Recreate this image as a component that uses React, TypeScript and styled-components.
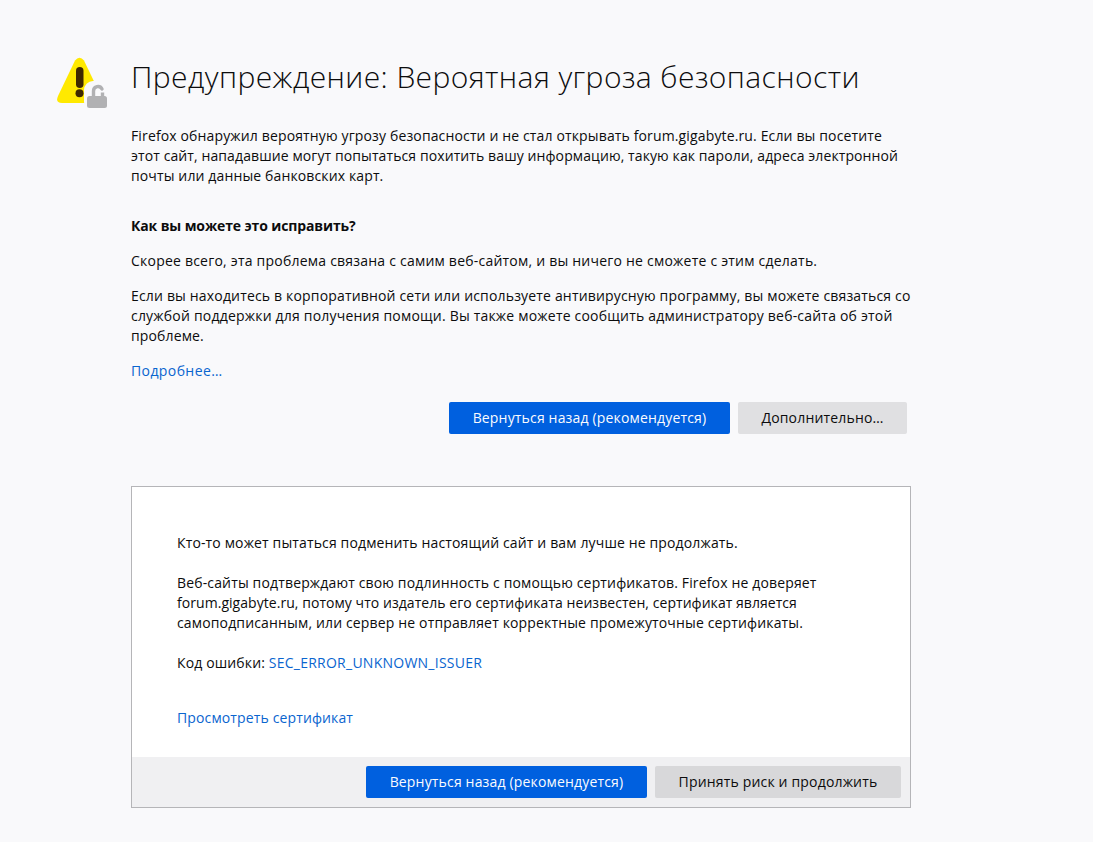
import React from "react";
import styled, { createGlobalStyle } from "styled-components";

const Global = createGlobalStyle`
  html, body { margin: 0; padding: 0; background: #f9f9fb; }
  body { font-family: "Open Sans", "Noto Sans", sans-serif; font-size: 14px; line-height: 20px; color: #0c0c0d; }
`;

const Page = styled.main`
  width: 1093px;
  height: 842px;
  overflow: hidden;
  box-sizing: border-box;
  padding: 52px 0 0 56px;
  display: flex;
  gap: 23px;
`;

const IconSlot = styled.div`
  width: 52px;
  flex: none;
`;

const Column = styled.div`
  width: 780px;
  flex: none;
`;

const Title = styled.h1`
  margin: -1px 0 0;
  font-size: 30px;
  line-height: 52px;
  font-weight: 300;
  letter-spacing: 0.41px;
  white-space: nowrap;
`;

const Para = styled.p<{ $top?: number }>`
  margin: ${(p) => p.$top ?? 0}px 0 0;
  white-space: nowrap;
  letter-spacing: 0.13px;
`;

const Line = styled.span<{ $track?: number }>`
  display: block;
  letter-spacing: ${(p) => p.$track ?? 0.13}px;
`;

const Strong = styled(Para)`
  font-weight: 700;
  letter-spacing: -0.12px;
`;

const TextLink = styled.a<{ $track?: number }>`
  color: #0a65cf;
  text-decoration: none;
  letter-spacing: ${(p) => p.$track ?? 0.13}px;
`;

const Actions = styled.div`
  display: flex;
  justify-content: flex-end;
  gap: 8px;
  margin-top: 21px;
  padding-right: 4px;
`;

const Button = styled.button<{ $primary?: boolean; $w: number }>`
  width: ${(p) => p.$w}px;
  height: 32px;
  border: 0;
  border-radius: 2px;
  padding: 0;
  font: inherit;
  letter-spacing: 0.17px;
  color: ${(p) => (p.$primary ? "#fbfbfe" : "#0c0c0d")};
  background: ${(p) => (p.$primary ? "#0060df" : "rgba(12, 12, 13, 0.1)")};
`;

const Panel = styled.section`
  margin-top: 52px;
  height: 322px;
  box-sizing: border-box;
  border: 1px solid #b5b5b8;
  background: #fff;
  display: flex;
  flex-direction: column;
`;

const PanelBody = styled.div`
  flex: 1;
  padding: 46px 45px 0;
`;

const PanelFooter = styled.div`
  height: 50px;
  box-sizing: border-box;
  flex: none;
  background: #f0f0f2;
  display: flex;
  justify-content: flex-end;
  align-items: flex-start;
  gap: 8px;
  padding: 9px 9px 0 0;
`;

const Warning = () => (
  <svg width="52" height="60" viewBox="0 0 52 60">
    <path d="M19 8.500Q23.500 3 28 8.500L45 44Q48 51 41 51H6Q-1 51 2 44Z" fill="#ffe900" />
    <rect x="20" y="15" width="7.500" height="21" rx="3.750" fill="#3e2800" />
    <circle cx="23.500" cy="41.300" r="4" fill="#3e2800" />
    <rect x="28" y="29" width="26" height="30" rx="9" fill="#f9f9fb" />
    <path d="M37.500 44V39a4.500 4.500 0 0 1 8.500-2" fill="none" stroke="#b1b1b3" strokeWidth="3.400" strokeLinecap="round" />
    <path d="M46.500 44v-3.500" fill="none" stroke="#b1b1b3" strokeWidth="3.400" />
    <rect x="31" y="44" width="20" height="12" rx="2.500" fill="#b1b1b3" />
  </svg>
);

export default function App() {
  return (
    <>
      <Global />
      <Page>
        <IconSlot>
          <Warning />
        </IconSlot>
        <Column>
          <Title>Предупреждение: Вероятная угроза безопасности</Title>
          <Para $top={23}>
            <Line $track={0.14}>Firefox обнаружил вероятную угрозу безопасности и не стал открывать forum.gigabyte.ru. Если вы посетите</Line>
            <Line $track={0.1}>этот сайт, нападавшие могут попытаться похитить вашу информацию, такую как пароли, адреса электронной</Line>
            <Line>почты или данные банковских карт.</Line>
          </Para>
          <Strong $top={30}>Как вы можете это исправить?</Strong>
          <Para $top={15}>
            <Line $track={0.22}>Скорее всего, эта проблема связана с самим веб-сайтом, и вы ничего не сможете с этим сделать.</Line>
          </Para>
          <Para $top={15}>
            <Line $track={0.17}>Если вы находитесь в корпоративной сети или используете антивирусную программу, вы можете связаться со</Line>
            <Line $track={0.2}>службой поддержки для получения помощи. Вы также можете сообщить администратору веб-сайта об этой</Line>
            <Line>проблеме.</Line>
          </Para>
          <Para $top={15}>
            <TextLink href="#" $track={0.4}>Подробнее…</TextLink>
          </Para>
          <Actions>
            <Button $primary $w={281}>Вернуться назад (рекомендуется)</Button>
            <Button $w={169}>Дополнительно…</Button>
          </Actions>
          <Panel>
            <PanelBody>
              <Para>
                <Line $track={0.14}>Кто-то может пытаться подменить настоящий сайт и вам лучше не продолжать.</Line>
              </Para>
              <Para $top={20}>
                <Line $track={0.15}>Веб-сайты подтверждают свою подлинность с помощью сертификатов. Firefox не доверяет</Line>
                <Line $track={0.05}>forum.gigabyte.ru, потому что издатель его сертификата неизвестен, сертификат является</Line>
                <Line $track={0.15}>самоподписанным, или сервер не отправляет корректные промежуточные сертификаты.</Line>
              </Para>
              <Para $top={20}>
                Код ошибки: <TextLink href="#" $track={0.25}>SEC_ERROR_UNKNOWN_ISSUER</TextLink>
              </Para>
              <Para $top={35}>
                <TextLink href="#">Просмотреть сертификат</TextLink>
              </Para>
            </PanelBody>
            <PanelFooter>
              <Button $primary $w={281}>Вернуться назад (рекомендуется)</Button>
              <Button $w={246}>Принять риск и продолжить</Button>
            </PanelFooter>
          </Panel>
        </Column>
      </Page>
    </>
  );
}
